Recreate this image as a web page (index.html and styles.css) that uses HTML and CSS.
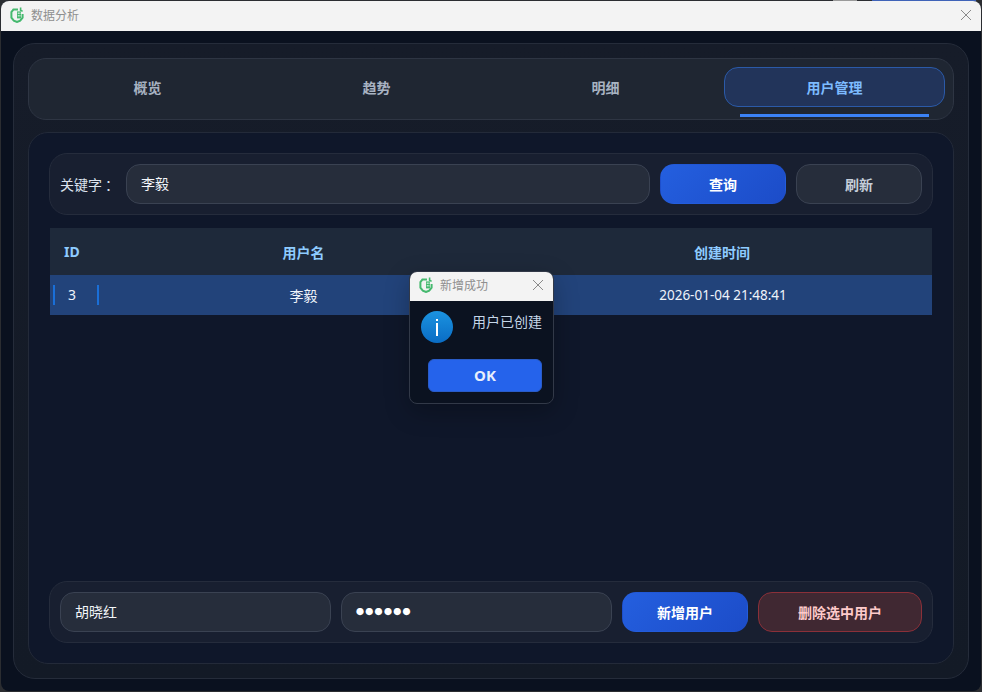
FILE: index.html
```html
<!DOCTYPE html>
<html lang="zh-CN">
<head>
<meta charset="UTF-8">
<title>数据分析</title>
<link rel="stylesheet" href="styles.css">
</head>
<body>
<div class="desk-bit desk-bit-grey"></div>
<div class="desk-bit desk-bit-blue"></div>
<div class="window">
    <div class="titlebar">
        <svg class="app-icon" viewBox="0 0 16 16" width="16" height="16">
            <path d="M9 2.4 L4.4 2.6 L2.4 5 L2.4 10.6 L4.8 13.6 L8 15 L11.2 13.6 L13.6 10.6 L13.6 7" fill="none" stroke="#46b96f" stroke-width="2"/>
            <path d="M11.6 0.6 L11.6 3.2 L13.6 4.4" fill="none" stroke="#46b96f" stroke-width="1.6"/>
            <rect x="8" y="4.4" width="4" height="7" fill="#46b96f"/>
            <rect x="8.8" y="5.6" width="1" height="1.2" fill="#fff"/>
            <rect x="10.4" y="5.6" width="1" height="1.2" fill="#fff"/>
            <rect x="8.8" y="8.2" width="1" height="1.2" fill="#fff"/>
            <rect x="10.4" y="8.2" width="1" height="1.2" fill="#fff"/>
        </svg>
        <span class="title-text">数据分析</span>
        <svg class="close-icon" viewBox="0 0 12 12" width="12" height="12">
            <path d="M1 1 L11 11 M11 1 L1 11" stroke="#8a8a8a" stroke-width="1" fill="none"/>
        </svg>
    </div>
    <div class="content">
        <div class="card">
            <div class="tabs">
                <div class="tab">概览</div>
                <div class="tab">趋势</div>
                <div class="tab">明细</div>
                <div class="tab tab-active">用户管理</div>
            </div>
            <div class="panel">
                <div class="toolbar">
                    <label class="field-label">关键字<span class="colon">：</span></label>
                    <div class="input input-grow">李毅</div>
                    <button class="btn btn-primary">查询</button>
                    <button class="btn btn-plain">刷新</button>
                </div>
                <table class="user-table">
                    <colgroup>
                        <col class="col-id">
                        <col class="col-name">
                        <col>
                    </colgroup>
                    <thead>
                        <tr>
                            <th class="cell-id-head">ID</th>
                            <th>用户名</th>
                            <th class="cell-time">创建时间</th>
                        </tr>
                    </thead>
                    <tbody>
                        <tr class="row-selected">
                            <td><span class="focus-cell">3</span></td>
                            <td>李毅</td>
                            <td class="cell-date">2026-01-04 21:48:41</td>
                        </tr>
                    </tbody>
                </table>
                <div class="toolbar toolbar-bottom">
                    <div class="input input-half">胡晓红</div>
                    <div class="input input-half input-password">●●●●●●</div>
                    <button class="btn btn-primary">新增用户</button>
                    <button class="btn btn-danger">删除选中用户</button>
                </div>
            </div>
        </div>
    </div>
</div>

<div class="dialog">
    <div class="dialog-title">
        <svg class="app-icon" viewBox="0 0 16 16" width="16" height="16">
            <path d="M9 2.4 L4.4 2.6 L2.4 5 L2.4 10.6 L4.8 13.6 L8 15 L11.2 13.6 L13.6 10.6 L13.6 7" fill="none" stroke="#46b96f" stroke-width="2"/>
            <path d="M11.6 0.6 L11.6 3.2 L13.6 4.4" fill="none" stroke="#46b96f" stroke-width="1.6"/>
            <rect x="8" y="4.4" width="4" height="7" fill="#46b96f"/>
            <rect x="8.8" y="5.6" width="1" height="1.2" fill="#fff"/>
            <rect x="10.4" y="5.6" width="1" height="1.2" fill="#fff"/>
            <rect x="8.8" y="8.2" width="1" height="1.2" fill="#fff"/>
            <rect x="10.4" y="8.2" width="1" height="1.2" fill="#fff"/>
        </svg>
        <span class="title-text">新增成功</span>
        <svg class="close-icon" viewBox="0 0 12 12" width="12" height="12">
            <path d="M1 1 L11 11 M11 1 L1 11" stroke="#8a8a8a" stroke-width="1" fill="none"/>
        </svg>
    </div>
    <div class="dialog-body">
        <div class="dialog-message">
            <div class="info-icon"><span class="info-dot"></span><span class="info-bar"></span></div>
            <span class="dialog-text">用户已创建</span>
        </div>
        <button class="btn-ok">OK</button>
    </div>
</div>
</body>
</html>
```

FILE: styles.css
```css
* {
    box-sizing: border-box;
}
html, body {
    height: 100%;
}
body {
    margin: 0;
    padding: 1px;
    background-color: #2b2d31;
    font-family: "Noto Sans", "Noto Sans CJK SC", sans-serif;
    font-size: 14px;
    color: #e5e7eb;
    overflow: hidden;
}
.desk-bit {
    position: absolute;
    top: 0;
    height: 2px;
}
.desk-bit-grey {
    left: 833px;
    width: 24px;
    background-color: #9a9a9a;
}
.desk-bit-blue {
    left: 872px;
    width: 104px;
    background-color: #3f63b8;
}
.window {
    position: relative;
    height: 690px;
    display: flex;
    flex-direction: column;
    border-radius: 8px;
    overflow: hidden;
    background-color: #0a111f;
}
.titlebar {
    height: 30px;
    flex: none;
    display: flex;
    align-items: center;
    padding: 0 9px 2px 8px;
    background-color: #f3f3f3;
}
.app-icon {
    flex: none;
    margin-right: 6px;
}
.title-text {
    font-size: 12px;
    color: #8f8f8f;
}
.close-icon {
    margin-left: auto;
}
.content {
    flex: 1;
    display: flex;
    padding: 12px;
    min-height: 0;
}
.card {
    flex: 1;
    display: flex;
    flex-direction: column;
    gap: 12px;
    padding: 14px;
    border: 1px solid #252c3a;
    border-radius: 22px;
    background: linear-gradient(#161c29, #131a26);
}
.tabs {
    height: 62px;
    flex: none;
    display: flex;
    gap: 8px;
    padding: 8px;
    border: 1px solid #2e3543;
    border-radius: 18px;
    background-color: #1f2632;
}
.tab {
    flex: 1;
    position: relative;
    height: 40px;
    line-height: 40px;
    text-align: center;
    font-weight: 700;
    color: #a8b3c2;
    border: 1px solid transparent;
    border-radius: 14px;
}
.tab-active {
    background-color: #22345a;
    border-color: #2b5aa8;
    color: #7dbbff;
}
.tab-active::after {
    content: "";
    position: absolute;
    left: 15px;
    right: 15px;
    bottom: -11px;
    height: 3px;
    background-color: #3b82f6;
}
.panel {
    flex: 1;
    min-height: 0;
    display: flex;
    flex-direction: column;
    padding: 20px;
    border: 1px solid #232a39;
    border-radius: 20px;
    background-color: #0f172a;
}
.toolbar {
    height: 62px;
    flex: none;
    display: flex;
    align-items: center;
    gap: 10px;
    padding: 0 10px;
    border: 1px solid #252c3c;
    border-radius: 18px;
    background-color: #181f30;
}
.toolbar-bottom {
    margin-top: auto;
}
.field-label {
    width: 56px;
    white-space: nowrap;
    color: #dbe3ee;
}
.colon {
    margin-left: 3px;
}
.input {
    height: 40px;
    line-height: 38px;
    padding: 0 14px;
    border: 1px solid #3a4252;
    border-radius: 14px;
    background-color: #262d3b;
    color: #f3f6fa;
}
.input-grow {
    flex: 1;
}
.input-half {
    width: 271px;
}
.input-password {
    font-size: 8px;
    letter-spacing: 1.3px;
    color: #fff;
}
.btn {
    width: 126px;
    height: 40px;
    flex: none;
    padding: 0;
    border: 1px solid transparent;
    border-radius: 14px;
    font-family: inherit;
    font-size: 14px;
    font-weight: 700;
    cursor: pointer;
}
.btn-primary {
    background: linear-gradient(135deg, #245fdf, #1c4cc8);
    color: #fff;
}
.btn-plain {
    background-color: #262d3b;
    border-color: #3a4252;
    color: #c5ced9;
}
.btn-danger {
    width: 164px;
    background-color: #402832;
    border-color: #8b3039;
    color: #fecaca;
}
.user-table {
    width: 882px;
    margin: 13px 1px 0;
    border-collapse: collapse;
    table-layout: fixed;
}
.col-id {
    width: 50px;
}
.col-name {
    width: 407px;
}
.user-table th {
    height: 47px;
    padding: 0;
    background-color: #1e293a;
    color: #8ecbff;
    font-weight: 700;
}
.user-table td {
    height: 40px;
    padding: 0;
    text-align: center;
    background-color: #22437a;
    color: #eef3fa;
}
.user-table .cell-id-head {
    text-align: left;
    padding-left: 14px;
}
.user-table .cell-time {
    padding-left: 5px;
}
.user-table .cell-date {
    padding-left: 7px;
    font-size: 13.5px;
}
.focus-cell {
    display: block;
    width: 46px;
    height: 20px;
    line-height: 20px;
    margin-left: 3px;
    padding-left: 13px;
    text-align: left;
    border-left: 2px solid #1a6fd8;
    border-right: 2px solid #1a6fd8;
}
.dialog {
    position: absolute;
    left: 409px;
    top: 271px;
    width: 145px;
    height: 133px;
    border: 1px solid #323948;
    border-radius: 8px;
    overflow: hidden;
    background-color: #0b1220;
    box-shadow: 0 8px 24px rgba(0, 0, 0, 0.25);
}
.dialog-title {
    height: 29px;
    display: flex;
    align-items: center;
    padding: 0 9px 3px 8px;
    background-color: #f3f3f3;
}
.dialog-title .app-icon {
    margin-right: 6px;
}
.dialog-body {
    padding: 10px 11px 0 18px;
}
.dialog-message {
    display: flex;
    justify-content: space-between;
    height: 48px;
    margin-left: -7px;
}
.info-icon {
    width: 32px;
    height: 32px;
    display: flex;
    flex-direction: column;
    align-items: center;
    justify-content: center;
    gap: 2px;
    border-radius: 50%;
    background: linear-gradient(#1b93e0, #0a6cc4);
}
.info-dot {
    width: 2px;
    height: 2px;
    background-color: #fff;
}
.info-bar {
    width: 2px;
    height: 13px;
    background-color: #fff;
}
.dialog-text {
    font-size: 14px;
    color: #c5d6e8;
}
.btn-ok {
    display: block;
    width: 114px;
    height: 33px;
    padding: 0 0 2px;
    border: 1px solid #2a5cc8;
    border-radius: 6px;
    background-color: #2563eb;
    color: #e8eefc;
    font-family: inherit;
    font-size: 15px;
    font-weight: 700;
    cursor: pointer;
}
```
